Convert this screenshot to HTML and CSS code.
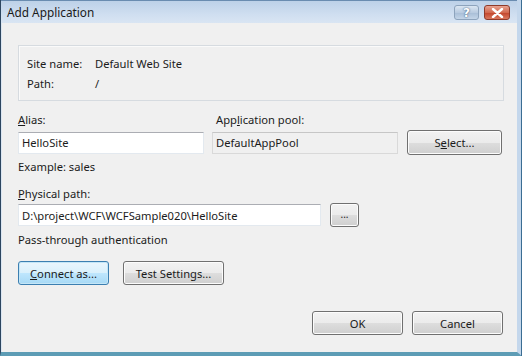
FILE: index.html
```html
<!DOCTYPE html>
<html lang="en">
<head>
  <meta charset="UTF-8">
  <title>Add Application</title>
  <link rel="stylesheet" href="styles.css">
</head>
<body>
  <div class="window">
    <!-- Title bar -->
    <div class="titlebar">
      <span class="title">Add Application</span>
      <div class="caption-btns">
        <span class="cap help">?</span>
        <span class="cap close">
          <svg width="13" height="10" viewBox="0 0 13 10"><path d="M2 1 L11 9 M11 1 L2 9" stroke="#fff" stroke-width="2.4" stroke-linecap="round"/></svg>
        </span>
      </div>
    </div>

    <div class="content">
      <!-- Site info -->
      <div class="info">
        <div class="info-row"><span class="info-key">Site name:</span><span>Default Web Site</span></div>
        <div class="info-row"><span class="info-key">Path:</span><span>/</span></div>
      </div>

      <!-- Alias / pool -->
      <div class="grid">
        <label class="lbl"><u>A</u>lias:</label>
        <label class="lbl">App<u>l</u>ication pool:</label>
        <span></span>
        <input class="field" type="text" value="HelloSite" readonly>
        <input class="field disabled" type="text" value="DefaultAppPool" readonly>
        <button class="btn select">S<u>e</u>lect...</button>
      </div>
      <p class="hint">Example: sales</p>

      <!-- Physical path -->
      <label class="lbl path-lbl"><u>P</u>hysical path:</label>
      <div class="path-row">
        <input class="field path" type="text" value="D:\project\WCF\WCFSample020\HelloSite" readonly>
        <button class="btn dots">...</button>
      </div>
      <p class="hint auth">Pass-through authentication</p>

      <div class="btn-row">
        <button class="btn focused"><u>C</u>onnect as...</button>
        <button class="btn test">Test Settings...</button>
      </div>

      <div class="footer">
        <button class="btn wide">OK</button>
        <button class="btn wide">Cancel</button>
      </div>
    </div>
  </div>
</body>
</html>
```

FILE: styles.css
```css
/* === BASE === */
* {
  margin: 0;
  padding: 0;
  box-sizing: border-box;
}
body {
  width: 522px;
  height: 356px;
  overflow: hidden;
  font-family: 'Noto Sans', 'Open Sans', sans-serif;
  font-size: 11.2px;
  color: #1b1b1b;
  background: #fff;
}
u {
  text-decoration: underline;
  text-underline-offset: 1px;
}

/* === WINDOW FRAME === */
.window {
  width: 522px;
  height: 356px;
  display: flex;
  flex-direction: column;
  background: #f0f0f0;
  border-left: 1px solid #2d4660;
  border-right: 5px solid #c4d7ec;
  border-bottom: 4px solid #5d9cb5;
  box-shadow: inset 1px 0 0 #dbe6f2, -1px 0 0 #2d4660;
  position: relative;
}
.window::after {
  content: "";
  position: absolute;
  right: -5px;
  top: 0;
  bottom: -4px;
  width: 1px;
  background: #3b6d93;
}
.titlebar {
  height: 23px;
  display: flex;
  align-items: center;
  justify-content: space-between;
  padding: 0 7px 0 6px;
  background: linear-gradient(#bdd1e8, #cfdef0 60%, #d9e5f3);
  border-top: 1px solid #6a8cb0;
}
.title {
  font-size: 11.8px;
  color: #1a1a1a;
}
.caption-btns {
  display: flex;
  gap: 5px;
  margin-top: 1px;
}
.cap {
  width: 25px;
  height: 15px;
  border-radius: 3px;
  display: flex;
  align-items: center;
  justify-content: center;
}
.help {
  border: 1px solid #8da3bc;
  background: linear-gradient(#dbe6f2, #b9cbe0 50%, #a7bdd6 51%, #c4d5e8);
  color: #fff;
  font-weight: bold;
  font-size: 12px;
  text-shadow: 0 0 2px #4d6a8c, 0 0 1px #4d6a8c;
  font-family: 'DejaVu Sans', sans-serif;
}
.close {
  width: 26px;
  border: 1px solid #8e3a2a;
  background: linear-gradient(#e8a493, #d2694f 50%, #c2432a 51%, #d9775d);
}

/* === CONTENT === */
.content {
  flex: 1;
  display: flex;
  flex-direction: column;
  padding: 22px 13px 0 17px;
}
.info {
  height: 56px;
  border: 1px solid #d6dbe0;
  box-shadow: inset 1px 1px 0 #fafafa;
  padding: 7px 8px 0 8px;
  display: flex;
  flex-direction: column;
}
.info-row {
  display: flex;
  height: 20px;
  align-items: center;
}
.info-key {
  width: 68px;
}

.lbl {
  display: block;
  line-height: 16px;
}
.grid {
  margin-top: 11px;
  display: grid;
  grid-template-columns: 186px 185px 95px;
  column-gap: 9px;
  row-gap: 2px;
  align-items: center;
}
.grid .lbl:nth-child(2) {
  margin-left: 3px;
}
.field {
  height: 22px;
  font-family: 'Noto Sans', 'Open Sans', sans-serif;
  font-size: 11.2px;
  color: #1b1b1b;
  background: #fff;
  border: 1px solid #e3e9ef;
  border-top-color: #abadb3;
  padding: 0 3px;
  outline: none;
}
.field.disabled {
  background: #f0f0f0;
  border-color: #d9d9d9;
  border-top-color: #c6c6c6;
  margin-left: -1px;
  width: 186px;
}
.hint {
  margin-top: 4px;
  line-height: 16px;
}
.path-lbl {
  margin-top: 11px;
}
.path-row {
  margin-top: 1px;
  display: flex;
  align-items: center;
  gap: 9px;
}
.field.path {
  width: 303px;
}
.auth {
  margin-top: 5px;
}

/* === BUTTONS === */
.btn {
  height: 24px;
  font-family: 'Noto Sans', 'Open Sans', sans-serif;
  font-size: 11.2px;
  color: #1b1b1b;
  border: 1px solid #707070;
  border-radius: 3px;
  background: linear-gradient(#f2f2f2, #ebebeb 50%, #dddddd 51%, #cfcfcf);
  box-shadow: inset 0 0 0 1px #fcfcfc;
}
.select {
  height: 25px;
}
.dots {
  width: 29px;
  height: 24px;
  font-size: 10px;
  padding-bottom: 2px;
}
.btn-row {
  margin-top: 13px;
  display: flex;
  gap: 14px;
}
.focused {
  width: 91px;
  border-color: #3c7fb1;
  background: linear-gradient(#eaf6fd, #d9f0fc 50%, #bee6fd 51%, #a7d9f5);
  box-shadow: inset 0 0 0 1px #c4e6f7;
}
.test {
  width: 101px;
}
.footer {
  margin-top: 26px;
  display: flex;
  justify-content: flex-end;
  gap: 9px;
  padding-right: 1px;
}
.wide {
  width: 91px;
}
```
